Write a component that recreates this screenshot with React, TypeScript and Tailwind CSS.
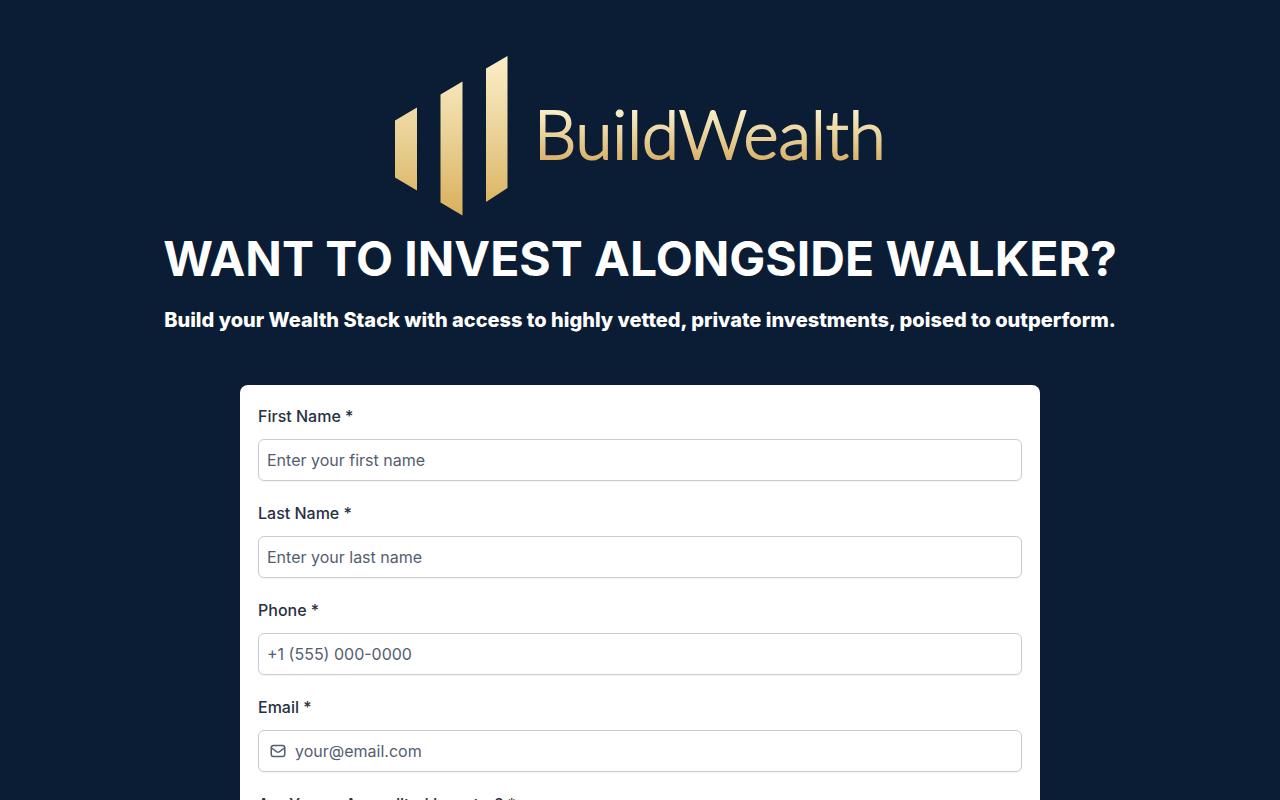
import { useState } from 'react';

const fields = [
  { id: 'firstName', label: 'First Name *', type: 'text', placeholder: 'Enter your first name' },
  { id: 'lastName', label: 'Last Name *', type: 'text', placeholder: 'Enter your last name' },
  { id: 'phone', label: 'Phone *', type: 'tel', placeholder: '+1 (555) 000-0000' },
  { id: 'email', label: 'Email *', type: 'email', placeholder: 'your@email.com' },
];

function Logo() {
  return (
    <svg viewBox="0 0 490 162" className="w-[490px] max-w-full" role="img" aria-label="BuildWealth">
      <defs>
        <linearGradient id="bars" gradientUnits="userSpaceOnUse" x1="0" y1="0" x2="0" y2="160">
          <stop offset="0" stopColor="#fbefc8" />
          <stop offset="0.5" stopColor="#ead196" />
          <stop offset="1" stopColor="#d9b05c" />
        </linearGradient>
        <linearGradient id="word" gradientUnits="userSpaceOnUse" x1="0" y1="56" x2="0" y2="106">
          <stop offset="0" stopColor="#f9edc6" />
          <stop offset="1" stopColor="#d8b066" />
        </linearGradient>
      </defs>
      <g fill="url(#bars)">
        <polygon points="0,64.5 22,51.5 22,134.5 0,121.5" />
        <polygon points="45.5,38.5 67.5,25.5 67.5,159.5 45.5,146.5" />
        <polygon points="91,12.5 112.5,0 112.5,132 91,146" />
      </g>
      <text
        x="139"
        y="103"
        fill="url(#word)"
        stroke="url(#word)"
        strokeWidth="2"
        fontSize="67"
        fontWeight="300"
        fontFamily="Lato, sans-serif"
      >
        BuildWealth
      </text>
    </svg>
  );
}

function MailIcon() {
  return (
    <svg
      viewBox="0 0 16 16"
      className="ml-[3px] size-4 shrink-0 text-[#545d70]"
      fill="none"
      stroke="currentColor"
      strokeWidth="1.5"
      strokeLinecap="round"
      strokeLinejoin="round"
      aria-hidden="true"
    >
      <rect x="1.25" y="2.5" width="13.5" height="11" rx="2.25" />
      <path d="M1.5 5 L6.9 8.8 Q8 9.5 9.1 8.8 L14.5 5" />
    </svg>
  );
}

export default function InvestPage() {
  const [form, setForm] = useState<Record<string, string>>({});

  const handleChange = (key: string, value: string) => {
    setForm((prev) => ({ ...prev, [key]: value }));
  };

  return (
    <div className="min-h-screen bg-[#0b1d35] px-4 pt-14 pb-16 font-['Inter',sans-serif]">
      {/* Header */}
      <header className="flex flex-col items-center text-center text-white">
        <Logo />
        <h1 className="mt-2 text-5xl leading-[66px] font-bold">WANT TO INVEST ALONGSIDE WALKER?</h1>
        <p className="mt-3.5 text-xl font-extrabold">
          Build your Wealth Stack with access to highly vetted, private investments, poised to
          outperform.
        </p>
      </header>

      {/* Lead form */}
      <form className="mx-auto mt-[51px] flex max-w-[800px] flex-col gap-5 rounded-lg bg-white px-[18px] pt-[19px] pb-8">
        {fields.map((field) => (
          <div key={field.id} className="flex flex-col gap-[11px]">
            <label htmlFor={field.id} className="text-base font-medium text-[#273142]">
              {field.label}
            </label>
            <div className="flex h-[42px] items-center gap-[9px] rounded-md border border-[#c9ccd3] bg-white px-2 shadow-xs">
              {field.id === 'email' && <MailIcon />}
              <input
                id={field.id}
                type={field.type}
                required
                placeholder={field.placeholder}
                value={form[field.id] ?? ''}
                onChange={(e) => handleChange(field.id, e.target.value)}
                className="w-full text-base text-[#273142] outline-none placeholder:text-[#545d70]"
              />
            </div>
          </div>
        ))}

        <fieldset>
          <legend className="text-base font-medium text-[#273142]">
            Are You an Accredited Investor? *
          </legend>
          <div className="mt-3 flex gap-6 text-base text-[#273142]">
            <label className="flex items-center gap-2">
              <input type="radio" name="accredited" value="yes" />
              Yes
            </label>
            <label className="flex items-center gap-2">
              <input type="radio" name="accredited" value="no" />
              No
            </label>
          </div>
        </fieldset>
      </form>
    </div>
  );
}
